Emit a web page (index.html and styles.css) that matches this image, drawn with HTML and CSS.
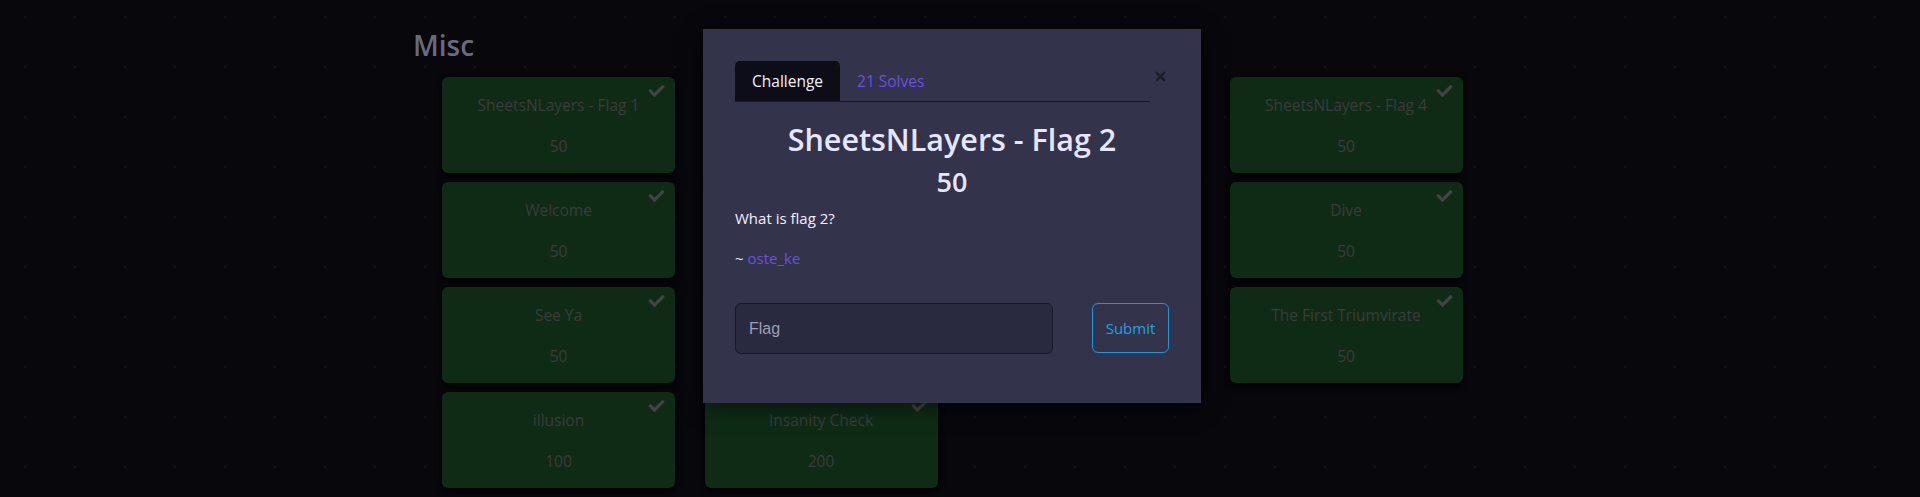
FILE: index.html
```html
<!DOCTYPE html>
<html lang="en">
<head>
<meta charset="utf-8">
<title>Challenges</title>
<link rel="stylesheet" href="styles.css">
</head>
<body>
<main class="page">
  <h1 class="category">Misc</h1>
  <div class="grid">
    <div class="card"><svg class="check" viewBox="0 0 512 512"><path d="M173.9 439.4l-166.4-166.4c-10-10-10-26.2 0-36.2l36.2-36.2c10-10 26.2-10 36.2 0L192 312.7 432.1 72.6c10-10 26.2-10 36.2 0l36.2 36.2c10 10 10 26.2 0 36.2l-294.4 294.4c-10 10-26.2 10-36.2 0z"/></svg><p class="name">SheetsNLayers - Flag 1</p><span class="pts">50</span></div>
    <div class="card covered"></div>
    <div class="card covered"></div>
    <div class="card"><svg class="check" viewBox="0 0 512 512"><path d="M173.9 439.4l-166.4-166.4c-10-10-10-26.2 0-36.2l36.2-36.2c10-10 26.2-10 36.2 0L192 312.7 432.1 72.6c10-10 26.2-10 36.2 0l36.2 36.2c10 10 10 26.2 0 36.2l-294.4 294.4c-10 10-26.2 10-36.2 0z"/></svg><p class="name">SheetsNLayers - Flag 4</p><span class="pts">50</span></div>

    <div class="card"><svg class="check" viewBox="0 0 512 512"><path d="M173.9 439.4l-166.4-166.4c-10-10-10-26.2 0-36.2l36.2-36.2c10-10 26.2-10 36.2 0L192 312.7 432.1 72.6c10-10 26.2-10 36.2 0l36.2 36.2c10 10 10 26.2 0 36.2l-294.4 294.4c-10 10-26.2 10-36.2 0z"/></svg><p class="name">Welcome</p><span class="pts">50</span></div>
    <div class="card covered"></div>
    <div class="card covered"></div>
    <div class="card"><svg class="check" viewBox="0 0 512 512"><path d="M173.9 439.4l-166.4-166.4c-10-10-10-26.2 0-36.2l36.2-36.2c10-10 26.2-10 36.2 0L192 312.7 432.1 72.6c10-10 26.2-10 36.2 0l36.2 36.2c10 10 10 26.2 0 36.2l-294.4 294.4c-10 10-26.2 10-36.2 0z"/></svg><p class="name">Dive</p><span class="pts">50</span></div>

    <div class="card"><svg class="check" viewBox="0 0 512 512"><path d="M173.9 439.4l-166.4-166.4c-10-10-10-26.2 0-36.2l36.2-36.2c10-10 26.2-10 36.2 0L192 312.7 432.1 72.6c10-10 26.2-10 36.2 0l36.2 36.2c10 10 10 26.2 0 36.2l-294.4 294.4c-10 10-26.2 10-36.2 0z"/></svg><p class="name">See Ya</p><span class="pts">50</span></div>
    <div class="card covered"></div>
    <div class="card covered"></div>
    <div class="card"><svg class="check" viewBox="0 0 512 512"><path d="M173.9 439.4l-166.4-166.4c-10-10-10-26.2 0-36.2l36.2-36.2c10-10 26.2-10 36.2 0L192 312.7 432.1 72.6c10-10 26.2-10 36.2 0l36.2 36.2c10 10 10 26.2 0 36.2l-294.4 294.4c-10 10-26.2 10-36.2 0z"/></svg><p class="name">The First Triumvirate</p><span class="pts">50</span></div>

    <div class="card"><svg class="check" viewBox="0 0 512 512"><path d="M173.9 439.4l-166.4-166.4c-10-10-10-26.2 0-36.2l36.2-36.2c10-10 26.2-10 36.2 0L192 312.7 432.1 72.6c10-10 26.2-10 36.2 0l36.2 36.2c10 10 10 26.2 0 36.2l-294.4 294.4c-10 10-26.2 10-36.2 0z"/></svg><p class="name">illusion</p><span class="pts">100</span></div>
    <div class="card"><svg class="check" viewBox="0 0 512 512"><path d="M173.9 439.4l-166.4-166.4c-10-10-10-26.2 0-36.2l36.2-36.2c10-10 26.2-10 36.2 0L192 312.7 432.1 72.6c10-10 26.2-10 36.2 0l36.2 36.2c10 10 10 26.2 0 36.2l-294.4 294.4c-10 10-26.2 10-36.2 0z"/></svg><p class="name">Insanity Check</p><span class="pts">200</span></div>
  </div>
</main>

<div class="modal" role="dialog">
  <div class="modal-head">
    <ul class="tabs">
      <li class="tab active">Challenge</li>
      <li class="tab link">21 Solves</li>
    </ul>
    <button class="close" aria-label="Close"><svg viewBox="0 0 10 10"><path d="M1 1 L9 9 M9 1 L1 9"/></svg></button>
  </div>
  <h2 class="title">SheetsNLayers - Flag 2</h2>
  <h3 class="value">50</h3>
  <p class="desc">What is flag 2?</p>
  <p class="desc">~ <a class="author">oste_ke</a></p>
  <form class="submit-row">
    <input class="flag" type="text" placeholder="Flag">
    <button class="submit" type="button">Submit</button>
  </form>
</div>
</body>
</html>
```
FILE: styles.css
```css
* { box-sizing: border-box; }
html, body { margin: 0; padding: 0; }
body {
  width: 1920px;
  height: 497px;
  overflow: hidden;
  background-color: #07070c;
  background-image: radial-gradient(circle, #101017 0, #101017 1px, transparent 1.6px);
  background-size: 50px 50px;
  background-position: 0 -8px;
  font-family: "Open Sans", "Noto Sans", sans-serif;
  position: relative;
}
.page {
  width: 1094px;
  margin: 0 auto;
  padding-top: 26px;
}
.category {
  margin: 0 0 13px 0;
  font-size: 28px;
  line-height: 38px;
  font-weight: 600;
  color: #696a7d;
}
.grid {
  margin-left: 29px;
  display: grid;
  grid-template-columns: repeat(4, 233px);
  column-gap: 29.5px;
  row-gap: 9px;
}
.card {
  position: relative;
  height: 96px;
  background: #0f2b16;
  border-radius: 6px;
  box-shadow: 0 3px 6px rgba(0,0,0,0.75);
  text-align: center;
  color: #3b3b3b;
  font-size: 15.5px;
  padding-top: 16px;
}
.card .name {
  margin: 0;
  line-height: 24px;
}
.card .pts {
  display: block;
  margin-top: 17px;
  line-height: 24px;
}
.check {
  position: absolute;
  top: 6px;
  right: 10px;
  width: 17px;
  height: 16px;
  fill: #434343;
}

.modal {
  position: absolute;
  left: 703px;
  top: 29px;
  width: 498px;
  height: 374px;
  background: #33334b;
  padding: 32px 32px 0 32px;
  box-shadow: 0 4px 20px rgba(0,0,0,0.5);
  color: #e6e6ff;
}
.modal-head {
  display: flex;
  align-items: flex-start;
}
.tabs {
  list-style: none;
  margin: 0;
  padding: 0;
  width: 418px;
  display: flex;
  border-bottom: 1px solid #181826;
}
.tab {
  font-size: 15.5px;
  line-height: 24px;
  padding: 8px 17px;
  border-radius: 5px 5px 0 0;
}
.tab.active {
  background: #0d0d17;
  color: #f2f2ff;
}
.tab.link { color: #6a4fe4; }
.close {
  margin-left: 2px;
  width: 17px;
  height: 17px;
  padding: 3px;
  margin-top: 7px;
  border: 0;
  background: transparent;
}
.close svg {
  display: block;
  width: 11px;
  height: 11px;
  stroke: #1c1c2b;
  stroke-width: 2;
}
.title {
  margin: 18px 0 0;
  text-align: center;
  font-size: 30.5px;
  line-height: 38px;
  font-weight: 600;
  color: #e6e6ff;
}
.value {
  margin: 8px 0 0;
  text-align: center;
  font-size: 27px;
  line-height: 32px;
  font-weight: 600;
  color: #e6e6ff;
}
.desc {
  margin: 8px 0 16px;
  font-size: 15px;
  line-height: 24px;
  color: #f0f0ff;
}
.desc + .desc { margin-top: 16px; }
.author { color: #6a4fe4; }
.submit-row {
  margin-top: 33px;
  display: flex;
  justify-content: space-between;
  align-items: flex-start;
}
.flag {
  width: 318px;
  height: 51px;
  background: #29293f;
  border: 1px solid #18182a;
  border-radius: 6px;
  padding: 0 13px;
  font-family: "Liberation Sans", Arial, sans-serif;
  font-size: 16px;
  color: #e6e6ff;
}
.flag::placeholder { color: #9e9eb8; }
.submit {
  width: 77px;
  height: 50px;
  background: transparent;
  border: 1px solid #1e98d6;
  border-radius: 6px;
  color: #23a0e0;
  font-family: "Open Sans", "Noto Sans", sans-serif;
  font-size: 15px;
  padding: 0;
}
```
